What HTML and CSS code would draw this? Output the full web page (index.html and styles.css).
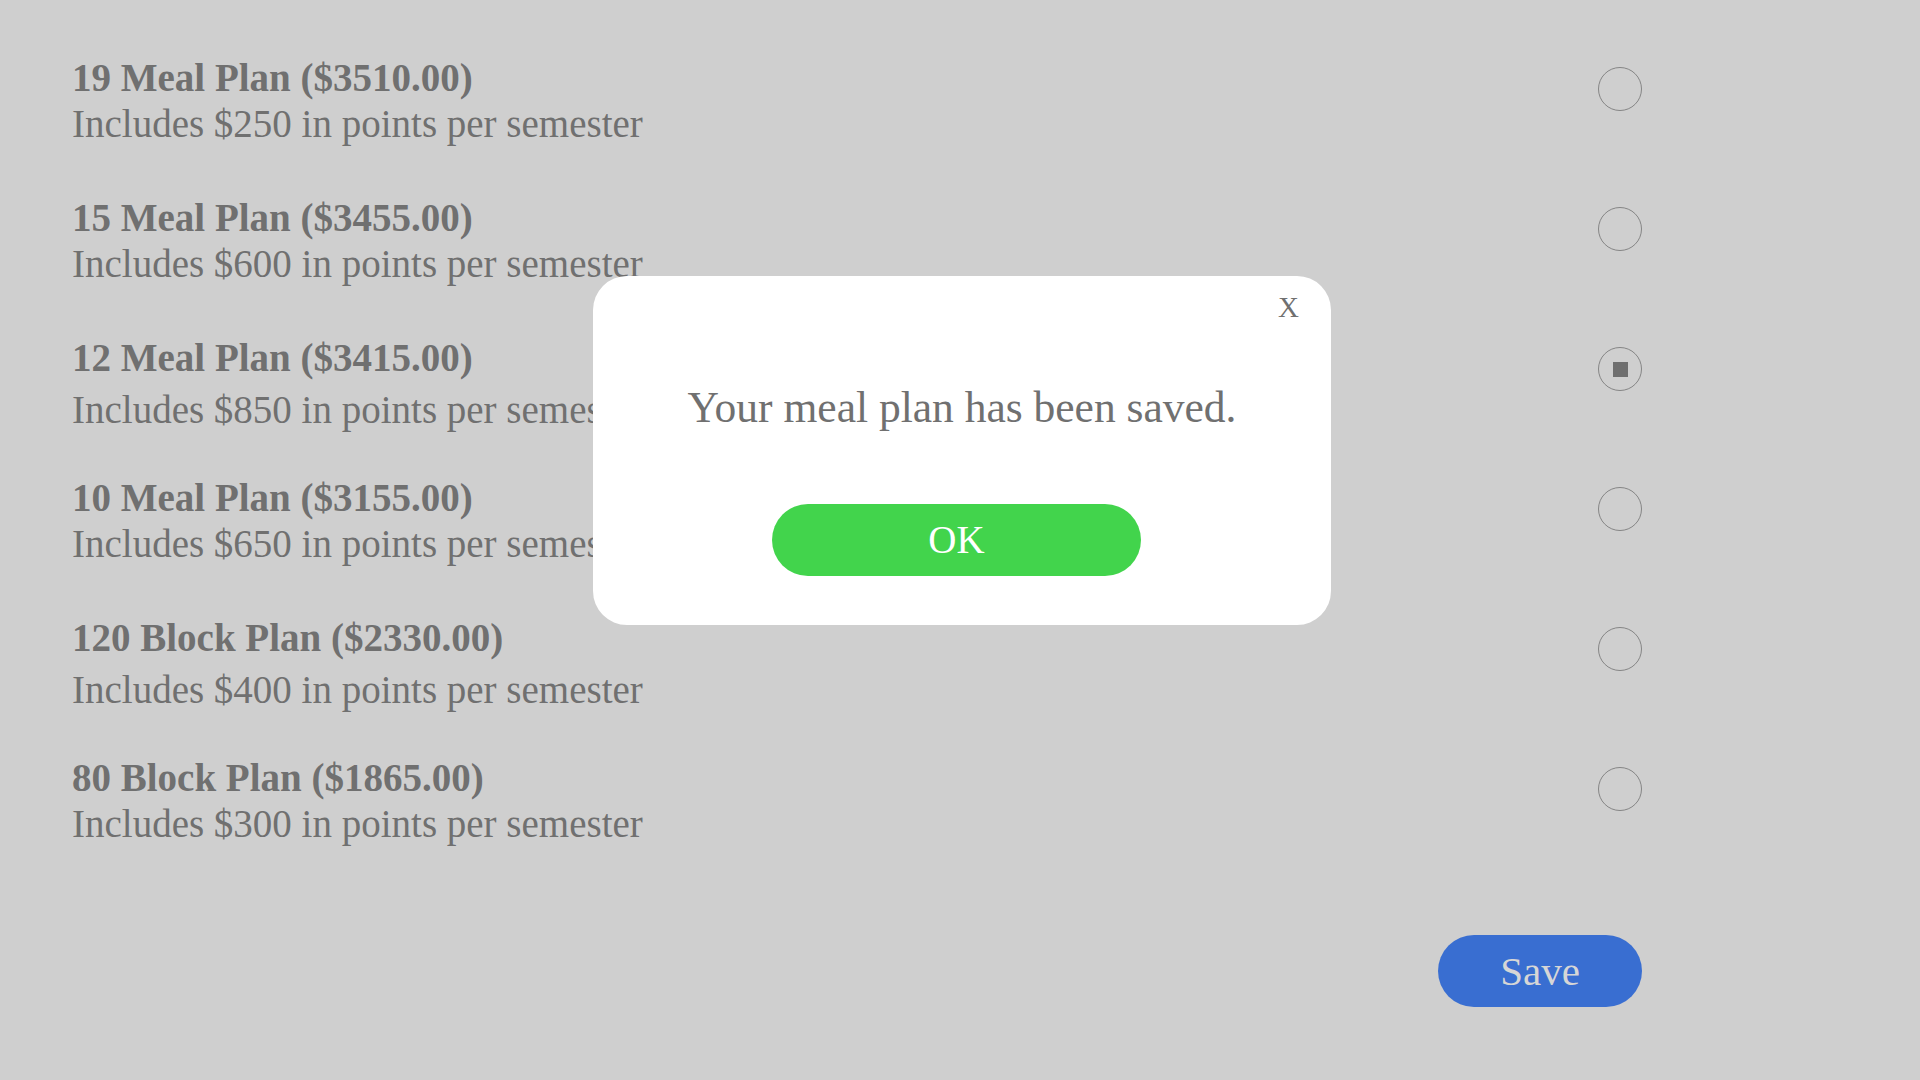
FILE: index.html
```html
<!DOCTYPE html>
<html lang="en">
<head>
<meta charset="utf-8">
<title>Meal Plan</title>
<link rel="stylesheet" href="styles.css">
</head>
<body>
<main class="page">
  <ul class="plans">
    <li class="plan">
      <div class="plan-text">
        <div class="plan-title">19 Meal Plan ($3510.00)</div>
        <div class="plan-desc">Includes $250 in points per semester</div>
      </div>
      <span class="radio"></span>
    </li>
    <li class="plan">
      <div class="plan-text">
        <div class="plan-title">15 Meal Plan ($3455.00)</div>
        <div class="plan-desc">Includes $600 in points per semester</div>
      </div>
      <span class="radio"></span>
    </li>
    <li class="plan plan-loose">
      <div class="plan-text">
        <div class="plan-title">12 Meal Plan ($3415.00)</div>
        <div class="plan-desc">Includes $850 in points per semester</div>
      </div>
      <span class="radio radio-checked"><span class="radio-dot"></span></span>
    </li>
    <li class="plan">
      <div class="plan-text">
        <div class="plan-title">10 Meal Plan ($3155.00)</div>
        <div class="plan-desc">Includes $650 in points per semester</div>
      </div>
      <span class="radio"></span>
    </li>
    <li class="plan plan-loose">
      <div class="plan-text">
        <div class="plan-title">120 Block Plan ($2330.00)</div>
        <div class="plan-desc">Includes $400 in points per semester</div>
      </div>
      <span class="radio"></span>
    </li>
    <li class="plan">
      <div class="plan-text">
        <div class="plan-title">80 Block Plan ($1865.00)</div>
        <div class="plan-desc">Includes $300 in points per semester</div>
      </div>
      <span class="radio"></span>
    </li>
  </ul>
  <div class="actions">
    <button class="save-btn" type="button">Save</button>
  </div>
</main>

<div class="overlay">
  <div class="modal" role="dialog">
    <button class="modal-close" type="button">X</button>
    <p class="modal-message">Your meal plan has been saved.</p>
    <button class="ok-btn" type="button">OK</button>
  </div>
</div>
</body>
</html>
```

FILE: styles.css
```css
html, body {
  margin: 0;
  padding: 0;
  height: 100%;
}

body {
  background: #cfcfcf;
  color: #707070;
  font-family: "Liberation Serif", "Times New Roman", serif;
}

.page {
  box-sizing: border-box;
  height: 1080px;
  padding: 55px 278px 0 72px;
}

.plans {
  list-style: none;
  margin: 0;
  padding: 0;
  display: grid;
  grid-auto-rows: 140px;
}

.plan {
  display: flex;
  justify-content: space-between;
  align-items: flex-start;
}

.plan-title {
  font-weight: bold;
  font-size: 39px;
  line-height: 46px;
  white-space: nowrap;
}

.plan-desc {
  font-size: 39px;
  line-height: 46px;
  white-space: nowrap;
}

.plan-loose .plan-desc {
  margin-top: 6px;
}

.radio {
  box-sizing: border-box;
  flex-shrink: 0;
  width: 44px;
  height: 44px;
  margin-top: 12px;
  border: 1px solid #858585;
  border-radius: 50%;
  display: flex;
  align-items: center;
  justify-content: center;
}

.radio-dot {
  width: 15px;
  height: 15px;
  background: #6f6f6f;
}

.actions {
  display: flex;
  justify-content: flex-end;
  margin-top: 40px;
}

.save-btn {
  width: 204px;
  height: 72px;
  border: none;
  border-radius: 36px;
  background: #396ed1;
  color: #d6d6d6;
  font-family: "Liberation Serif", "Times New Roman", serif;
  font-size: 41px;
  line-height: 72px;
  padding: 0;
}

.overlay {
  position: fixed;
  inset: 0;
  display: flex;
  justify-content: center;
  align-items: flex-start;
  padding: 276px 0 0 4px;
  box-sizing: border-box;
}

.modal {
  box-sizing: border-box;
  width: 738px;
  height: 349px;
  background: #ffffff;
  border-radius: 34px;
  padding: 16px 0 49px;
  display: flex;
  flex-direction: column;
}

.modal-close {
  align-self: flex-end;
  margin-right: 32px;
  background: none;
  border: none;
  padding: 0;
  color: #707070;
  font-family: "Liberation Serif", "Times New Roman", serif;
  font-size: 29px;
  line-height: 30px;
  height: 30px;
}

.modal-message {
  margin: 60px 0 0;
  text-align: center;
  font-size: 43.5px;
  line-height: 50px;
  color: #707070;
}

.ok-btn {
  align-self: flex-start;
  margin: 72px 0 0 179px;
  width: 369px;
  height: 72px;
  border: none;
  border-radius: 36px;
  background: #42d44c;
  color: #ffffff;
  font-family: "Liberation Serif", "Times New Roman", serif;
  font-size: 39px;
  line-height: 72px;
  padding: 0;
}
```
